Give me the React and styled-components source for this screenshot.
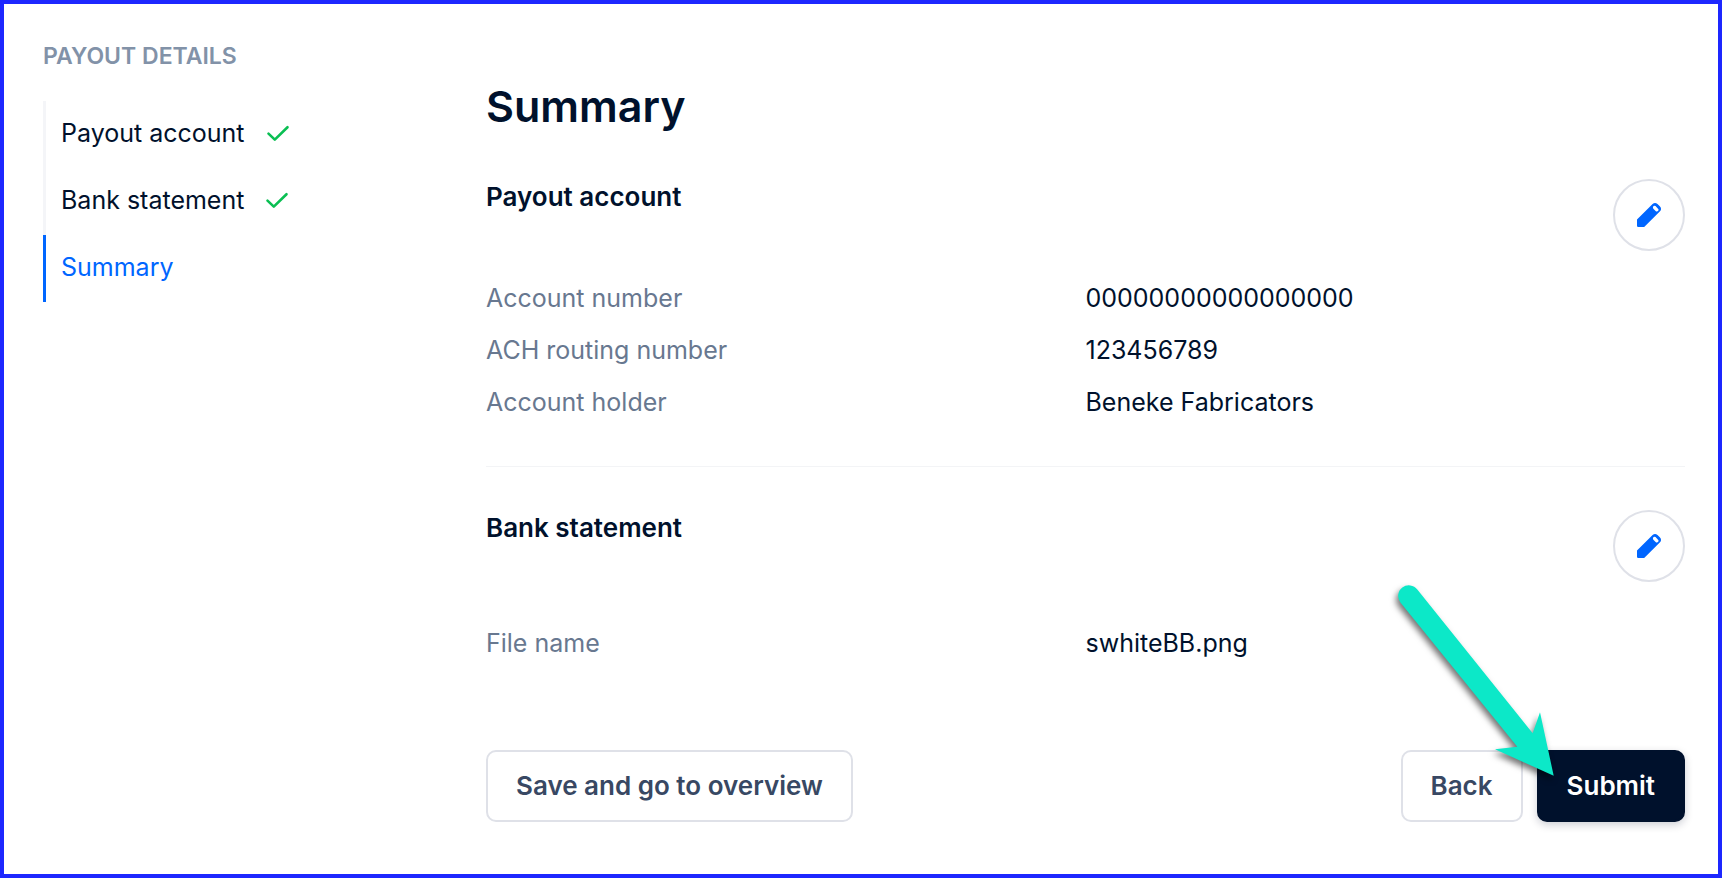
import React from 'react';
import styled, { createGlobalStyle } from 'styled-components';

const GlobalStyle = createGlobalStyle`
  * {
    box-sizing: border-box;
  }
  body {
    margin: 0;
    background: #fff;
    color: #00112c;
    font-family: Inter, "Liberation Sans", sans-serif;
    font-size: 25px;
    line-height: 36px;
  }
  h1, h2, h3, ul, dl, dd {
    margin: 0;
    padding: 0;
  }
`;

const Page = styled.div`
  display: grid;
  grid-template-columns: 443px minmax(0, 1fr);
  min-height: 100vh;
  padding: 36px 33px 48px 39px;
  border: 4px solid #1d27ff;
`;

const SidebarTitle = styled.h3`
  margin-bottom: 29px;
  color: #8292a8;
  font-size: 23px;
  font-weight: 600;
  line-height: 32px;
  text-transform: uppercase;
`;

const Steps = styled.ul`
  list-style: none;
`;

const Step = styled.li`
  border-left: 3px solid ${({ $active }) => ($active ? '#0066ff' : '#f4f5f8')};
`;

const StepLink = styled.a`
  display: flex;
  align-items: center;
  gap: 21px;
  height: 67px;
  padding: 0 0 3px 15px;
  color: ${({ $active }) => ($active ? '#0066ff' : '#00112c')};
  text-decoration: none;
`;

const Main = styled.main`
  padding-top: 38px;
`;

const Title = styled.h1`
  margin-bottom: 45px;
  font-size: 43px;
  font-weight: 600;
  line-height: 56px;
`;

const Section = styled.section`
  & + & {
    margin-top: 38px;
    padding-top: 43px;
    border-top: 1px solid #f3f4f6;
  }
`;

const SectionHead = styled.div`
  display: flex;
  align-items: flex-start;
  justify-content: space-between;
  margin-bottom: ${({ $gap }) => $gap}px;
`;

const SectionTitle = styled.h2`
  font-size: 26px;
  font-weight: 600;
  line-height: 36px;
`;

const EditButton = styled.button`
  display: flex;
  align-items: center;
  justify-content: center;
  width: 72px;
  height: 72px;
  padding: 0;
  border: 2px solid #dfe1e8;
  border-radius: 50%;
  background: #fff;
  cursor: pointer;
`;

const Row = styled.div`
  display: grid;
  grid-template-columns: 1fr 1fr;
  padding: 8px 0;
`;

const Label = styled.dt`
  color: #687890;
`;

const Actions = styled.div`
  position: relative;
  display: flex;
  gap: 14px;
  margin-top: 81px;
`;

const Button = styled.button`
  height: 72px;
  padding: 0 28px 2px;
  border: 2px solid ${({ $primary }) => ($primary ? '#00112c' : '#dfe1e8')};
  border-radius: 10px;
  background: ${({ $primary }) => ($primary ? '#00112c' : '#fff')};
  box-shadow: ${({ $primary }) => ($primary ? '0 3px 8px rgba(0, 17, 44, 0.2)' : 'none')};
  color: ${({ $primary }) => ($primary ? '#fff' : '#384863')};
  font-family: inherit;
  font-size: 26px;
  font-weight: 600;
  cursor: pointer;
`;

const SaveButton = styled(Button)`
  margin-right: auto;
`;

/* floats over the buttons and points at Submit */
const Pointer = styled.svg`
  position: absolute;
  right: 125px;
  bottom: 42px;
  overflow: visible;
  pointer-events: none;
  filter: drop-shadow(-2px 4px 3px rgba(0, 0, 0, 0.55));
`;

const CheckIcon = () => (
  <svg width="24" height="24" viewBox="0 0 24 24" fill="none" stroke="#0abf53" strokeWidth="2.6" strokeLinecap="round" strokeLinejoin="round" aria-hidden="true">
    <path d="M2.500 12.600L8.800 18.600L21.500 6.200" />
  </svg>
);

const PencilIcon = () => (
  <svg width="26" height="26" viewBox="0 0 26 26" aria-hidden="true">
    <path
      fill="#0066ff"
      fillRule="evenodd"
      d="M1 17.6L16.6 2Q19 -.2 21.500 2L23.800 4.300Q26.200 6.800 24 9.200L8.700 24.500Q8.200 25 7.500 25H2.200Q1 25 1 23.800ZM17.600 4.100Q16.200 5.400 17.600 6.900L19.600 8.900Q21 10.200 22.200 8.700Q23 7.800 22 6.700L19.500 4.100Q18.500 3.300 17.600 4.100Z"
    />
  </svg>
);

const steps = [
  { name: 'Payout account', done: true },
  { name: 'Bank statement', done: true },
  { name: 'Summary', active: true },
];

const sections = [
  {
    title: 'Payout account',
    gap: 21,
    rows: [
      ['Account number', '00000000000000000'],
      ['ACH routing number', '123456789'],
      ['Account holder', 'Beneke Fabricators'],
    ],
  },
  {
    title: 'Bank statement',
    gap: 35,
    rows: [['File name', 'swhiteBB.png']],
  },
];

const App = () => {
  return (
    <>
      <GlobalStyle />
      <Page>
        <nav>
          <SidebarTitle>Payout details</SidebarTitle>
          <Steps>
            {steps.map(({ name, done, active }) => (
              <Step key={name} $active={active}>
                <StepLink href="#" $active={active} aria-current={active ? 'step' : undefined}>
                  {name}
                  {done && <CheckIcon />}
                </StepLink>
              </Step>
            ))}
          </Steps>
        </nav>
        <Main>
          <Title>Summary</Title>
          {sections.map(({ title, gap, rows }) => (
            <Section key={title}>
              <SectionHead $gap={gap}>
                <SectionTitle>{title}</SectionTitle>
                <EditButton type="button" aria-label={`Edit ${title}`}>
                  <PencilIcon />
                </EditButton>
              </SectionHead>
              <dl>
                {rows.map(([label, value]) => (
                  <Row key={label}>
                    <Label>{label}</Label>
                    <dd>{value}</dd>
                  </Row>
                ))}
              </dl>
            </Section>
          ))}
          <Actions>
            <SaveButton type="button">Save and go to overview</SaveButton>
            <Button type="button">Back</Button>
            <Button type="submit" $primary>Submit</Button>
            <Pointer width="170" height="200" viewBox="0 0 170 200" aria-hidden="true">
              <path
                fill="#0ce8c8"
                d="M10.400 22.500A10.200 10.200 0 1 1 27.300 9.500L142.700 153.300L150 132.300L163.700 195.700L105 169.300L127.300 166.700Z"
              />
            </Pointer>
          </Actions>
        </Main>
      </Page>
    </>
  );
};

export default App;
